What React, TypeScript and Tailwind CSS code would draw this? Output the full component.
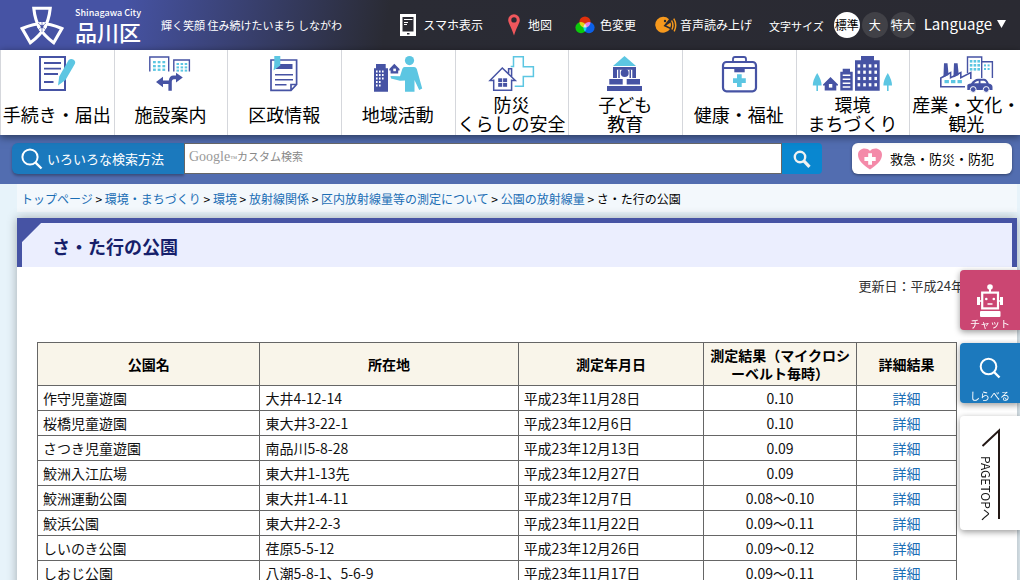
import type { ReactNode } from 'react';

const NAVY = '#4653a4';
const CYAN = '#5cc6e2';

type Point = [number, number];

const grid = (xs: number[], ys: number[]): Point[] => ys.flatMap((y) => xs.map((x): Point => [x, y]));

function Dots({ xs, ys, w, h, fill }: { xs: number[]; ys: number[]; w: number; h: number; fill: string }) {
  return (
    <g fill={fill}>
      {grid(xs, ys).map(([x, y]) => (
        <rect key={`${x}-${y}`} x={x} y={y} width={w} height={h} />
      ))}
    </g>
  );
}

function NavIcon({ children }: { children: ReactNode }) {
  return (
    <svg viewBox="0 0 80 37" className="h-[37px] w-20 shrink-0" fill="none" aria-hidden="true">
      {children}
    </svg>
  );
}

const ProcedureIcon = () => (
  <NavIcon>
    <rect x="23" y="1" width="25" height="33" stroke={NAVY} strokeWidth="2" />
    <path d="M27 7H44M27 12.7H44M27 18H41M27 26H36.5" stroke={NAVY} strokeWidth="1.8" />
    <path d="M51.5 4.2Q54 2 56.7 3.8Q59 5.6 57.8 8L48.5 24L41 29.5L42.2 20.5Z" fill={CYAN} />
  </NavIcon>
);

const FacilityIcon = () => (
  <NavIcon>
    <path d="M19.8 15.5V1H38.7V15.5M43.8 15.5V4H59.4V15.5" stroke={NAVY} strokeWidth="1.4" />
    <Dots xs={[23, 27.7, 32.4]} ys={[5, 9, 12.6]} w={2.8} h={2.3} fill={CYAN} />
    <Dots xs={[46.5, 50.6, 54.7]} ys={[7, 10.4, 13.6]} w={2.5} h={2} fill={CYAN} />
    <path d="M26 26L33 20.8V24.5H38.8Q39.5 19.6 43.5 19.6H46V16.8L52.8 21.6L46 26.6V23.3H44Q41.8 23.3 41.8 26V34.8H38.4V28H33V31.2Z" fill={NAVY} />
  </NavIcon>
);

const GovernmentIcon = () => (
  <NavIcon>
    <path d="M27 4H52.6V28.5L47 34.3H27ZM52.6 28.5H47V34.3" stroke={NAVY} strokeWidth="1.7" />
    <rect x="32" y="8" width="16.5" height="5" fill={NAVY} />
    <path d="M31 18.7H49M31 23.7H49M31 28.8H42.5" stroke={NAVY} strokeWidth="1.6" />
    <path d="M30.3 0H36.3V9.5L29.5 14.5Q30.3 10 30.3 7Z" fill={CYAN} />
  </NavIcon>
);

const CommunityIcon = () => (
  <NavIcon>
    <path d="M18 8H27.7V12.3H30V35.7H16V12.3H18Z" fill={NAVY} />
    <Dots xs={[18, 21, 24]} ys={[14.5, 18, 21.5]} w={1.6} h={2} fill="#fff" />
    <Dots xs={[18, 21]} ys={[25, 28.5]} w={1.6} h={2} fill="#fff" />
    <path d="M31.3 13L36.3 7.8L41.5 13V14.5H40.2V17.5H32.6V14.5H31.3Z" fill={NAVY} />
    <rect x="35.3" y="12.6" width="2.6" height="2.6" fill="#fff" />
    <circle cx="51.5" cy="4.6" r="4.6" fill={CYAN} />
    <path d="M46.5 11H56Q58 11 58.8 13L64.2 32.5L61.2 34L56.5 24V35.7H47V24.4L42 24.7L33 22.4L32.5 20L42 20.3L44.3 13Q45 11 46.5 11Z" fill={CYAN} />
  </NavIcon>
);

const SafetyIcon = () => (
  <NavIcon>
    <path d="M39.7 10.5H42.5V.8H52.3V10.7H62.4V20.5H52.3V30.3H43.7" stroke={CYAN} strokeWidth="1.5" />
    <path d="M22.7 23.5V34.2H40.6V23.5M22.7 24.5H19L31.3 12L44.3 24.5H40.6M37.6 17.5V12.8H40.6V20.5" stroke={NAVY} strokeWidth="1.5" />
    <Dots xs={[27.2, 32.1]} ys={[22.3, 27]} w={4} h={3.8} fill={NAVY} />
  </NavIcon>
);

const ChildrenIcon = () => (
  <NavIcon>
    <path d="M39.5 0L51 10H28Z" fill={CYAN} />
    <path d="M28 11H51V22H47.3V13.8H46V22H33.3V13.8H32V22H28Z" fill={NAVY} />
    <path d="M33.3 13.8H46V22H33.3Z" fill="#fff" />
    <circle cx="39.7" cy="17" r="4" fill={NAVY} />
    <path d="M33.3 13.8H34.8V22H33.3ZM44.5 13.8H46V22H44.5Z" fill={NAVY} />
    <path d="M24.3 23H37.7V28.4H24.3ZM41.7 23H55V28.4H41.7ZM22 30H57V35H22Z" fill={NAVY} />
  </NavIcon>
);

const HealthIcon = () => (
  <NavIcon>
    <rect x="24" y="6" width="33" height="29.3" rx="3.5" stroke={NAVY} strokeWidth="2.2" />
    <path d="M34 6V3Q34 1 36 1H45Q47 1 47 3V6M24 12H57" stroke={NAVY} strokeWidth="1.8" />
    <path d="M35.3 12H45.7V16.3H35.3Z" fill={NAVY} />
    <path d="M38 18.3H42.7V22.3H46.8V27H42.7V31H38V27H34V22.3H38Z" fill={CYAN} />
  </NavIcon>
);

const TownIcon = () => (
  <NavIcon>
    <path d="M5.2 17Q9.6 24 9.6 29.5H6V35H4.4V29.5H.8Q.8 24 5.2 17ZM75.8 17Q80 24 80 29.5H76.6V35H75V29.5H71.4Q71.4 24 75.8 17Z" fill={CYAN} />
    <path d="M11 28.5L18.5 21L26 28.5V29.5H24.3V34.5H12.7V29.5H11Z" fill={NAVY} />
    <rect x="16.9" y="28" width="3.4" height="3.6" fill="#fff" />
    <path d="M30.7 12.7H38V15.7H40.7V34.5H28.3V15.7H30.7Z" fill={NAVY} />
    <path d="M30.7 19.2H38.3M30.7 23.2H38.3M30.7 27.2H38.3M30.7 31H38.3" stroke="#fff" strokeWidth="1.4" />
    <path d="M49 0H62V4.3H67.7V34.7H43V4.3H49Z" fill={NAVY} />
    <Dots xs={[45.6, 51.2, 56.8, 62.4]} ys={[8.3, 14.6, 20.9, 27.2]} w={2.6} h={3.2} fill="#fff" />
  </NavIcon>
);

const IndustryIcon = () => (
  <NavIcon>
    <path d="M41.5 17V1H55.7V22M55.7 5.7H66.4V22" stroke={NAVY} strokeWidth="1.4" />
    <Dots xs={[43.8, 47.6, 51.4]} ys={[4, 8, 12]} w={2.6} h={2.6} fill={CYAN} />
    <Dots xs={[58, 61.6]} ys={[8.4, 12]} w={2} h={2} fill={CYAN} />
    <path d="M39 30.7H14.8V22L24.6 16.6V21.8L34.8 16.6V21.8L44.8 16.6V23" stroke={NAVY} strokeWidth="1.6" />
    <path d="M18 7.3H21.5L22.6 19L17.4 21.5ZM28 7.3H31.6L32.8 19L27.4 21.5Z" fill={NAVY} />
    <Dots xs={[18.5, 25, 31.5]} ys={[24]} w={4.4} h={3.2} fill={CYAN} />
    <path d="M41.3 29.5Q41.3 27.6 45 27.4Q48.5 22.8 52 22.8H58Q61 23 62.8 27.4Q66.5 28 66.5 31V34H41.3Z" fill={NAVY} />
    <path d="M48 27.3Q50.2 24.8 52.7 24.8V27.3ZM54.5 24.8H58Q59.5 25 60.5 27.3H54.5Z" fill="#fff" />
    <circle cx="47.2" cy="33.5" r="2.9" fill={NAVY} stroke="#fff" />
    <circle cx="60.2" cy="33.5" r="2.9" fill={NAVY} stroke="#fff" />
  </NavIcon>
);

const navItems: { lines: string[]; Icon: () => ReactNode }[] = [
  { lines: ['手続き・届出'], Icon: ProcedureIcon },
  { lines: ['施設案内'], Icon: FacilityIcon },
  { lines: ['区政情報'], Icon: GovernmentIcon },
  { lines: ['地域活動'], Icon: CommunityIcon },
  { lines: ['防災', 'くらしの安全'], Icon: SafetyIcon },
  { lines: ['子ども', '教育'], Icon: ChildrenIcon },
  { lines: ['健康・福祉'], Icon: HealthIcon },
  { lines: ['環境', 'まちづくり'], Icon: TownIcon },
  { lines: ['産業・文化・', '観光'], Icon: IndustryIcon },
];

const crumbs = ['トップページ', '環境・まちづくり', '環境', '放射線関係', '区内放射線量等の測定について', '公園の放射線量'];

const rows = [
  ['作守児童遊園', '大井4-12-14', '平成23年11月28日', '0.10'],
  ['桜橋児童遊園', '東大井3-22-1', '平成23年12月6日', '0.10'],
  ['さつき児童遊園', '南品川5-8-28', '平成23年12月13日', '0.09'],
  ['鮫洲入江広場', '東大井1-13先', '平成23年12月27日', '0.09'],
  ['鮫洲運動公園', '東大井1-4-11', '平成23年12月7日', '0.08～0.10'],
  ['鮫浜公園', '東大井2-2-3', '平成23年11月22日', '0.09～0.11'],
  ['しいのき公園', '荏原5-5-12', '平成23年12月26日', '0.09～0.12'],
  ['しおじ公園', '八潮5-8-1、5-6-9', '平成23年11月17日', '0.09～0.11'],
];

function CityLogo() {
  return (
    <a href="#" className="flex items-center gap-[11px] text-white">
      <svg viewBox="0 0 44 40" className="h-10 w-11" fill="none" stroke="#fff" strokeWidth="3.1" aria-hidden="true">
        {[0, 120, 240].map((a) => (
          <path key={a} d="M-1.5 3.5Q-7 -6 -8.2 -18.2H8.2Q7 -6 1.5 3.5" transform={`translate(22 21.5) rotate(${a})`} />
        ))}
        <path d="M18 25L26 18M18 18L26 25M22 16V27" stroke={NAVY} strokeWidth=".6" />
      </svg>
      <span className="flex flex-col">
        <span className="text-[9px] leading-3 font-medium">Shinagawa City</span>
        <span className="text-[22px] leading-6 font-medium">品川区</span>
      </span>
    </a>
  );
}

function Header() {
  return (
    <header className="flex h-[50px] items-center bg-[linear-gradient(100deg,#4653a4_0%,#4653a4_12%,#2a2b34_38%,#2a2a32_100%)] pr-3.5 pl-5 whitespace-nowrap text-white">
      <CityLogo />
      <p className="ml-5 text-[11px] leading-4">輝く笑顔 住み続けたいまち しながわ</p>
      <div className="ml-auto flex items-center text-xs leading-4">
        <a href="#" className="flex items-center gap-[7px]">
          <svg viewBox="0 0 16 22" className="h-[22px] w-4" aria-hidden="true">
            <path fill="#fff" d="M0 0H16V22H0Z" />
            <path fill="#2a2a32" d="M2.5 3H13.5V17.5H2.5Z" />
            <path stroke="#fff" d="M4 5.5H12.5M4 8.5H8M4 10.5H7" fill="none" />
            <path fill="#2a2a32" d="M7 19H9.5V20.5H7Z" />
          </svg>
          スマホ表示
        </a>
        <a href="#" className="ml-[25px] flex items-center gap-2">
          <svg viewBox="0 0 12 22" className="h-[22px] w-3" aria-hidden="true">
            <path fillRule="evenodd" fill="#f0575c" d="M6 .3A5.8 5.8 0 0 0 .2 6.2C.2 9 3 12 6 21.5C9 12 11.8 9 11.8 6.2A5.8 5.8 0 0 0 6 .3ZM6 3.2A2.7 2.7 0 1 1 6 8.6A2.7 2.7 0 0 1 6 3.2Z" />
          </svg>
          地図
        </a>
        <a href="#" className="ml-[23px] flex items-center gap-[5px]">
          <svg viewBox="0 0 20 18" className="h-[18px] w-5 [isolation:isolate]" aria-hidden="true">
            <g className="[&>circle]:mix-blend-screen">
              <circle cx="10" cy="6" r="5.6" fill="#e0300c" />
              <circle cx="6" cy="11.6" r="5.6" fill="#0cc80c" />
              <circle cx="14" cy="11.6" r="5.6" fill="#0c60e8" />
            </g>
          </svg>
          色変更
        </a>
        <a href="#" className="ml-[19px] flex items-center gap-[3px]">
          <svg viewBox="0 0 22 18" className="h-[18px] w-[22px]" fill="none" aria-hidden="true">
            <path fill="#f7991d" d="M14 3.2A8 8 0 1 0 15 13L8.5 10Z" />
            <circle cx="10" cy="5" r="1.2" fill="#2a2a32" />
            <path fill="#f7991d" d="M11.2 9.6L15.6 6.6Q16.6 9.4 15.4 11.6Z" />
            <path d="M16.6 4.5Q19 8.8 17 13.5M18.8 2.6Q22.4 8.8 19.2 15.3" stroke="#f7991d" strokeWidth="1.5" />
          </svg>
          音声読み上げ
        </a>
        <div className="ml-[17px] flex items-center" role="group" aria-label="文字サイズ">
          <span className="pt-0.5 text-[11px]">文字サイズ</span>
          <div className="ml-[10px] flex gap-0.5">
            <button className="size-[26px] rounded-full bg-white text-black">標準</button>
            <button className="size-[26px] rounded-full bg-[#414147]">大</button>
            <button className="size-[26px] rounded-full bg-[#414147]">特大</button>
          </div>
        </div>
        <button className="ml-2 flex items-center gap-[5px] pb-0.5 text-[15px] leading-5">
          Language
          <svg viewBox="0 0 9 8" className="h-2 w-[9px]" fill="#fff" aria-hidden="true">
            <path d="M0 0H9L4.5 8Z" />
          </svg>
        </button>
      </div>
    </header>
  );
}

function MainNav() {
  return (
    <nav className="relative overflow-x-clip bg-white shadow-[0_2px_8px_rgba(0,0,0,0.5)]">
      <ul className="-mr-[3px] grid grid-cols-9">
        {navItems.map(({ lines, Icon }) => (
          <li key={lines[0]} className="border-l border-[#d5d7dc]">
            <a href="#" className="flex h-[85px] flex-col items-center pt-1.5 pr-px">
              <Icon />
              <span className="flex grow flex-col justify-center text-center text-lg leading-[19px] whitespace-nowrap text-black">
                {lines.map((line) => (
                  <span key={line}>{line}</span>
                ))}
              </span>
            </a>
          </li>
        ))}
      </ul>
    </nav>
  );
}

function SearchBar() {
  return (
    <div className="flex h-[49px] items-center bg-[#526db0] pr-2 pb-0.5 pl-3">
      <button className="flex h-[31px] w-[172px] items-center gap-1 rounded-l-md bg-[#1b79bd] pl-[9px] text-[13px] text-white shadow-[0_2px_3px_rgba(0,0,0,0.3)]">
        <svg viewBox="0 0 22 22" className="size-[22px]" fill="none" stroke="#fff" strokeWidth="2" aria-hidden="true">
          <circle cx="9" cy="9" r="7.6" />
          <path d="M14.3 14.3L20.5 20.5" strokeWidth="2.4" />
        </svg>
        いろいろな検索方法
      </button>
      <form className="flex grow" onSubmit={(e) => e.preventDefault()}>
        <div className="relative grow">
          <input type="text" aria-label="カスタム検索" className="block h-[31px] w-full border border-[#666] bg-white px-1 text-sm" />
          <span className="pointer-events-none absolute top-1 left-[5px] flex items-baseline text-xs leading-4 text-[#888]">
            <span className="font-['Liberation_Serif',serif] text-sm text-[#999]">Google</span>
            <span className="font-['Liberation_Serif',serif] text-[7px]">™</span>
            <span className="text-[11px]">カスタム検索</span>
          </span>
        </div>
        <button aria-label="検索" className="flex h-[31px] w-10 items-center justify-center rounded-r-sm bg-[#0987d0]">
          <svg viewBox="0 0 18 18" className="size-[18px]" fill="none" stroke="#f1f1f1" aria-hidden="true">
            <circle cx="7" cy="7" r="5.2" strokeWidth="2.4" />
            <path d="M10.8 10.8L16.5 16.8" strokeWidth="3.2" />
          </svg>
        </button>
      </form>
      <a href="#" className="ml-[30px] flex h-[31px] w-40 items-center gap-2 rounded-md bg-white pl-1.5 text-[13px] text-black shadow-[0_1px_3px_rgba(0,0,0,0.4)]">
        <svg viewBox="0 0 24 22" className="h-[22px] w-6" aria-hidden="true">
          <path fill="#f48aa9" d="M12 21.5C5 17 0 12.5 0 6.8C0 .5 8 -1.5 12 3C16 -1.5 24 .5 24 6.8C24 12.5 19 17 12 21.5Z" />
          <path fill="#fff" d="M10.2 5.3H14V9H17.7V13H14V16.7H10.2V13H6.4V9H10.2Z" />
        </svg>
        救急・防災・防犯
      </a>
    </div>
  );
}

function Breadcrumbs() {
  return (
    <nav aria-label="パンくずリスト" className="h-7 bg-[#f3f8fc] pt-1.5 pl-1 text-xs leading-[18px]">
      {crumbs.map((c) => (
        <span key={c}>
          <a href="#" className="text-[#1b6eb5]">
            {c}
          </a>
          {' > '}
        </span>
      ))}
      さ・た行の公園
    </nav>
  );
}

function ParkTable() {
  return (
    <table className="w-full table-fixed border-collapse text-sm leading-[18px] text-[#111] [&_td]:border [&_td]:border-[#666] [&_td]:px-[5px] [&_td]:py-[3px] [&_th]:border [&_th]:border-[#666] [&_th]:bg-[#f9f5ea] [&_th]:py-[3px]">
      <colgroup>
        <col className="w-[24.2%]" />
        <col className="w-[28.1%]" />
        <col className="w-[20.2%]" />
        <col className="w-[16.6%]" />
        <col />
      </colgroup>
      <thead>
        <tr className="h-[43px] text-black">
          <th>公園名</th>
          <th>所在地</th>
          <th>測定年月日</th>
          <th>
            測定結果（マイクロシ
            <br />
            ーベルト毎時）
          </th>
          <th>詳細結果</th>
        </tr>
      </thead>
      <tbody>
        {rows.map(([name, place, date, value]) => (
          <tr key={name}>
            <td>{name}</td>
            <td>{place}</td>
            <td>{date}</td>
            <td className="text-center">{value}</td>
            <td className="text-center">
              <a href="#" className="text-[#1b6eb5]">
                詳細
              </a>
            </td>
          </tr>
        ))}
      </tbody>
    </table>
  );
}

function SideButtons() {
  return (
    <aside className="fixed top-[270px] right-0 flex w-[60px] flex-col gap-[13px] text-center text-[10px] leading-3 text-white [&>*]:rounded-l-sm [&>*]:shadow-[0_2px_6px_rgba(0,0,0,0.4)]">
      <button className="flex h-[60px] flex-col items-center bg-[#cb4672] pt-3.5">
        <svg viewBox="0 0 28 34" className="h-[34px] w-7" fill="none" aria-hidden="true">
          <circle cx="14" cy="3" r="2.8" fill="#fff" />
          <path d="M14 4V8" stroke="#fff" strokeWidth="2" />
          <rect x="6.2" y="8.6" width="15.8" height="15.8" stroke="#fff" strokeWidth="2.2" />
          <path d="M1 13H4V21H1ZM24 13H27V21H24Z" fill="#fff" />
          <path d="M3 17H6M22 17H25M11.5 20H16.5" stroke="#fff" strokeWidth="1.6" />
          <circle cx="10.3" cy="15" r="1.3" fill="#fff" />
          <circle cx="17.8" cy="15" r="1.3" fill="#fff" />
          <rect x="4" y="27" width="20.5" height="6" rx="1" fill="#fff" />
        </svg>
        チャット
      </button>
      <button className="flex h-[60px] flex-col items-center gap-[11px] bg-[#1c79bd] pt-3.5">
        <svg viewBox="0 0 22 22" className="size-[22px]" fill="none" stroke="#fff" strokeWidth="2" aria-hidden="true">
          <circle cx="9.5" cy="9.5" r="7.8" />
          <path d="M15 15L20.5 20.5" strokeWidth="2.4" />
        </svg>
        しらべる
      </button>
      <a href="#" className="flex h-[114px] items-start justify-center bg-white pt-3 text-black">
        <svg viewBox="0 0 22 92" className="h-[92px] w-[22px] overflow-visible" fill="none" aria-label="PAGETOPへ" role="img">
          <path d="M3.5 18L20 2.5V91" stroke="#231815" strokeWidth="2" />
          <text transform="translate(2 28) rotate(90)" fill="#111" className="font-['Noto_Sans_CJK_JP',sans-serif] text-[12px]">
            PAGETOPへ
          </text>
        </svg>
      </a>
    </aside>
  );
}

export default function App() {
  return (
    <div lang="ja" className="h-screen overflow-hidden bg-[#e7f3fa] font-['Noto_Sans_CJK_JP',sans-serif] text-black">
      <Header />
      <MainNav />
      <SearchBar />
      <div className="pr-[3px] pl-[17px]">
        <Breadcrumbs />
        <main className="mt-1.5 bg-white pb-10 shadow-[0_0_10px_rgba(0,0,0,0.3)]">
          <div className="border-x-[5px] border-t-[5px] border-[#4653a4] bg-[linear-gradient(135deg,#4653a4_13px,#ebeefe_14px)]">
            <h1 className="pt-[11px] pb-[9px] pl-[30px] text-lg leading-6 font-bold text-[#161f6b]">さ・た行の公園</h1>
          </div>
          <p className="pt-2.5 pr-[53px] text-right text-[13px] leading-[18px] text-[#333]">更新日：平成24年</p>
          <div className="pt-[47px] pr-[60px] pl-5">
            <ParkTable />
          </div>
        </main>
      </div>
      <SideButtons />
    </div>
  );
}
